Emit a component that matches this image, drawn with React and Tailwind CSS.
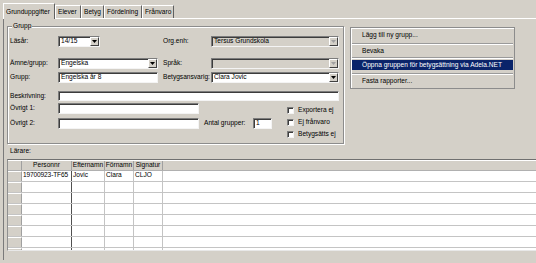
const sunken =
  "border border-t-[#7c7c7c] border-l-[#7c7c7c] border-r-[#f4f4f4] border-b-[#f4f4f4] shadow-[inset_1px_1px_0_#3c3c3c]";

function Arrow({ disabled }) {
  return (
    <div className="w-[9px] shrink-0 flex items-center justify-center bg-[#d4d0c8] border border-t-white border-l-white border-r-[#404040] border-b-[#404040]">
      <svg width="5" height="3" viewBox="0 0 5 3">
        <path d="M0 0h5L2.5 3z" fill={disabled ? "#a0a0a0" : "#000"} />
      </svg>
    </div>
  );
}

function Select({ w, value, disabled }) {
  return (
    <div className={`${w} h-[11px] flex ${sunken} ${disabled ? "bg-[#d4d0c8]" : "bg-white"}`}>
      <div className="flex-1 flex items-center pl-[2px] whitespace-nowrap overflow-hidden">{value}</div>
      <Arrow disabled={disabled} />
    </div>
  );
}

function Input({ w, h = "h-[11px]", value }) {
  return (
    <div className={`${w} ${h} flex items-center pl-[2px] whitespace-nowrap bg-white ${sunken}`}>{value}</div>
  );
}

function Label({ children, w = "w-[48px]" }) {
  return <div className={`${w} shrink-0 whitespace-nowrap`}>{children}</div>;
}

function Check({ label }) {
  return (
    <div className="flex items-center gap-[4px] h-[7px]">
      <div className={`w-[7px] h-[7px] bg-white ${sunken}`} />
      <span className="whitespace-nowrap">{label}</span>
    </div>
  );
}

const tabs = [
  { name: "Grunduppgifter", w: "w-[52px]" },
  { name: "Elever", w: "w-[26px]" },
  { name: "Betyg", w: "w-[23px]" },
  { name: "Fördelning", w: "w-[38px]" },
  { name: "Frånvaro", w: "w-[32px]" },
];

const cols = [
  { name: "Personnr", w: "w-[50px]" },
  { name: "Efternamn", w: "w-[33px]" },
  { name: "Förnamn", w: "w-[29px]" },
  { name: "Signatur", w: "w-[29px]" },
];

const rows = [["19700923-TF65", "Jovic", "Clara", "CLJO"], [], [], [], [], [], [], []];

function MenuSep() {
  return <div className="h-[2px] border-t border-t-[#9a9a9a] border-b border-b-white" />;
}

export default function App() {
  return (
    <div className="w-[536px] h-[263px] bg-[#d4d0c8] overflow-hidden text-[6.6px] leading-none text-black whitespace-nowrap font-['Liberation_Sans',Arial,sans-serif]">
      {/* tab strip */}
      <div className="flex items-end h-[18px] pl-[3px]">
        {tabs.map((t, i) => (
          <div
            key={t.name}
            className={`${t.w} flex items-center pl-[2px] border-l border-l-white border-t border-t-white border-r border-r-[#606060] ${
              i === 0 ? "h-[16px] pt-[1px] bg-[#d4d0c8] relative top-[1px]" : "h-[13px] pt-[1px]"
            }`}
          >
            {t.name}
          </div>
        ))}
      </div>

      {/* tab page */}
      <div className="ml-[3px] w-[540px] h-[242px] border-l border-l-[#7a7a7a] border-t border-t-white">
        <div className="flex items-start">
          {/* group box */}
          <div className="relative ml-[3px] mt-[7px] w-[337px] h-[118px] border border-[#8c8c8c] shadow-[inset_1px_1px_0_#fff,1px_1px_0_#fff]">
            <div className="absolute left-[4px] top-[-4px] px-[1px] bg-[#d4d0c8]">Grupp</div>

            <div className="pl-[2px] pt-[9px] flex flex-col">
              <div className="flex items-center">
                <div className="w-[153px] flex items-center">
                  <Label>Läsår:</Label>
                  <Select w="w-[42px]" value="14/15" />
                </div>
                <Label>Org.enh:</Label>
                <Select w="w-[128px]" value="Tersus Grundskola" disabled />
              </div>

              <div className="flex items-center mt-[11px]">
                <div className="w-[153px] flex items-center">
                  <Label>Ämne/grupp:</Label>
                  <Select w="w-[100px]" value="Engelska" />
                </div>
                <Label>Språk:</Label>
                <Select w="w-[128px]" value="" disabled />
              </div>

              <div className="flex items-center mt-[3px]">
                <div className="w-[153px] flex items-center">
                  <Label>Grupp:</Label>
                  <Input w="w-[100px]" value="Engelska år 8" />
                </div>
                <Label>Betygsansvarig:</Label>
                <Select w="w-[128px]" value="Clara Jovic" />
              </div>

              <div className="flex items-center mt-[8px]">
                <Label>Beskrivning:</Label>
                <Input w="w-[281px]" h="h-[10px]" value="" />
              </div>

              <div className="flex items-start mt-[2px]">
                <div className="flex flex-col gap-[4px]">
                  <div className="flex items-center">
                    <Label>Övrigt 1:</Label>
                    <Input w="w-[141px]" value="" />
                  </div>
                  <div className="flex items-center">
                    <Label>Övrigt 2:</Label>
                    <Input w="w-[141px]" value="" />
                  </div>
                </div>
                <div className="flex items-center ml-[5px] mt-[15px]">
                  <Label w="w-[49px]">Antal grupper:</Label>
                  <Input w="w-[19px]" value="1" />
                </div>
                <div className="flex flex-col gap-[5px] ml-[15px] mt-[4px]">
                  <Check label="Exportera ej" />
                  <Check label="Ej frånvaro" />
                  <Check label="Betygsätts ej" />
                </div>
              </div>
            </div>
          </div>

          {/* action menu */}
          <div className="ml-[6px] mt-[8px] w-[165px] h-[62px] flex flex-col px-[1px] border border-[#8c8c8c] shadow-[inset_1px_1px_0_#fff]">
            <div className="h-[15px] flex items-center pl-[10px]">Lägg till ny grupp...</div>
            <MenuSep />
            <div className="h-[12px] flex items-center pl-[10px]">Bevaka</div>
            <MenuSep />
            <div className="h-[14px] pt-[1px]">
              <div className="h-[10px] flex items-center pl-[10px] bg-[#0a246a] text-white">
                Öppna gruppen för betygsättning via Adela.NET
              </div>
            </div>
            <MenuSep />
            <div className="flex-1 flex items-center pl-[10px]">Fasta rapporter...</div>
          </div>
        </div>

        {/* teachers */}
        <div className="ml-[6px] mt-[4px]">Lärare:</div>
        <div className="ml-[3px] mt-[4px] h-[92px] overflow-hidden border-t border-t-[#707070] border-l border-l-[#909090] border-b border-b-[#e8e8e8] bg-white">
          <div className="flex h-[11px] bg-[#d4d0c8] border-t border-t-white border-b border-b-[#b0b0b0]">
            <div className="w-[14px] shrink-0 border-r border-r-[#a0a0a0]" />
            {cols.map((c) => (
              <div key={c.name} className={`${c.w} shrink-0 flex items-center justify-center border-r border-r-[#a0a0a0]`}>
                {c.name}
              </div>
            ))}
            <div className="flex-1" />
          </div>
          {rows.map((r, i) => (
            <div key={i} className="flex h-[11px] border-b border-b-[#c4c4c4]">
              <div className="w-[14px] shrink-0 bg-[#d4d0c8] border-r border-r-[#a0a0a0] border-t border-t-white" />
              {cols.map((c, j) => (
                <div
                  key={c.name}
                  className={`${c.w} shrink-0 flex items-center pl-[1px] overflow-hidden border-r ${
                    j === 0 ? "border-r-[#505050] tracking-[-0.15px]" : "border-r-[#c4c4c4]"
                  }`}
                >
                  {r[j] || ""}
                </div>
              ))}
              <div className="flex-1" />
            </div>
          ))}
        </div>
      </div>
    </div>
  );
}
